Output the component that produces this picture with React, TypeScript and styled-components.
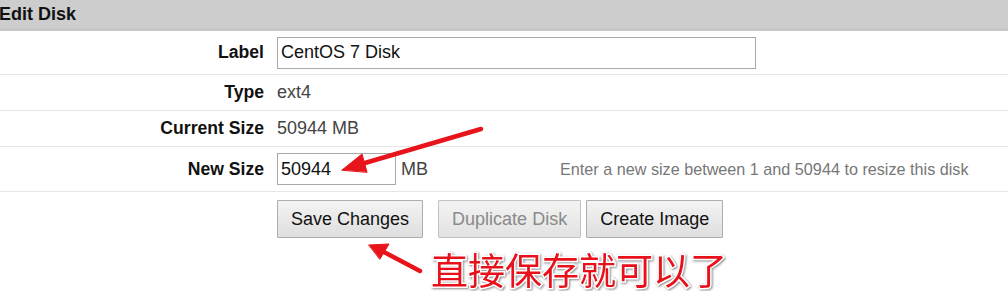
import React from 'react';
import styled, { createGlobalStyle } from 'styled-components';

const GlobalStyle = createGlobalStyle`
  html, body {
    margin: 0;
    padding: 0;
    background: #fff;
  }
  body {
    font-family: 'Liberation Sans', Arial, sans-serif;
    overflow: hidden;
  }
`;

const Page = styled.div`
  position: relative;
  width: 1008px;
  height: 291px;
  overflow: hidden;
`;

const TitleBar = styled.div`
  height: 28px;
  background: #cdcdcd;
  border-bottom: 3px solid #c6c6c6;
  display: flex;
  align-items: center;
`;

const Title = styled.h2`
  margin: 0 0 0 -1px;
  font-size: 18px;
  font-weight: bold;
  color: #111;
`;

const Row = styled.div<{ $h: number }>`
  display: grid;
  grid-template-columns: 264px 1fr;
  column-gap: 13px;
  align-items: center;
  height: ${(p) => p.$h}px;
  box-sizing: border-box;
  border-bottom: 1px solid #e6e6e6;
`;

const Label = styled.div`
  text-align: right;
  font-weight: bold;
  font-size: 17.6px;
  color: #111;
`;

const Value = styled.div`
  display: flex;
  align-items: center;
  font-size: 18px;
  color: #444;
`;

const TextInput = styled.input<{ $w: number }>`
  box-sizing: border-box;
  width: ${(p) => p.$w}px;
  height: 32px;
  border: 1px solid #a9a9a9;
  padding: 0 3px;
  font-family: 'Liberation Sans', Arial, sans-serif;
  font-size: 18px;
  color: #111;
  outline: none;
`;

const Unit = styled.span`
  margin-left: 5px;
  color: #444;
`;

const Hint = styled.span`
  margin-left: 132px;
  font-size: 16.2px;
  color: #777;
`;

const Actions = styled.div`
  display: flex;
  padding: 8px 0 0 277px;
`;

const Button = styled.button<{ $ml?: number }>`
  height: 38px;
  margin-left: ${(p) => p.$ml ?? 0}px;
  padding: 0 13px;
  border: 1px solid #adadad;
  border-radius: 1px;
  background: linear-gradient(#f4f4f4, #dedede);
  font-family: 'Liberation Sans', Arial, sans-serif;
  font-size: 18px;
  color: #111;
  &:disabled {
    color: #8a8a8a;
    border-color: #c2c2c2;
    background: linear-gradient(#f4f4f4, #e2e2e2);
  }
`;

const Overlay = styled.svg`
  position: absolute;
  left: 0;
  top: 0;
  pointer-events: none;
`;

const Note = styled.div`
  position: absolute;
  left: 431px;
  top: 249px;
  font-family: 'Noto Sans CJK SC', sans-serif;
  font-size: 37px;
  line-height: 40px;
  color: #e8101a;
  -webkit-text-stroke: 3px #fff;
  paint-order: stroke fill;
  filter: drop-shadow(1px 1px 1px rgba(0, 0, 0, 0.45));
`;

const App: React.FC = () => {
  return (
    <Page>
      <GlobalStyle />
      <TitleBar>
        <Title>Edit Disk</Title>
      </TitleBar>
      <Row $h={44}>
        <Label>Label</Label>
        <Value>
          <TextInput $w={479} defaultValue="CentOS 7 Disk" />
        </Value>
      </Row>
      <Row $h={36}>
        <Label>Type</Label>
        <Value>ext4</Value>
      </Row>
      <Row $h={36}>
        <Label>Current Size</Label>
        <Value>50944 MB</Value>
      </Row>
      <Row $h={45}>
        <Label>New Size</Label>
        <Value>
          <TextInput $w={119} defaultValue="50944" />
          <Unit>MB</Unit>
          <Hint>Enter a new size between 1 and 50944 to resize this disk</Hint>
        </Value>
      </Row>
      <Actions>
        <Button>Save Changes</Button>
        <Button $ml={15} disabled>
          Duplicate Disk
        </Button>
        <Button $ml={5}>Create Image</Button>
      </Actions>

      <Overlay width={1008} height={291} viewBox="0 0 1008 291">
        <g fill="#e8141b" stroke="#e8141b" strokeLinecap="round">
          <line x1={481} y1={129} x2={358} y2={165} strokeWidth={4.5} />
          <polygon points="342,170 362,154 367,172" strokeWidth={1} />
          <line x1={420} y1={271} x2={382} y2={251} strokeWidth={4.5} />
          <polygon points="369,245 389,244 380,259" strokeWidth={1} />
        </g>
      </Overlay>
      <Note>直接保存就可以了</Note>
    </Page>
  );
};

export default App;
